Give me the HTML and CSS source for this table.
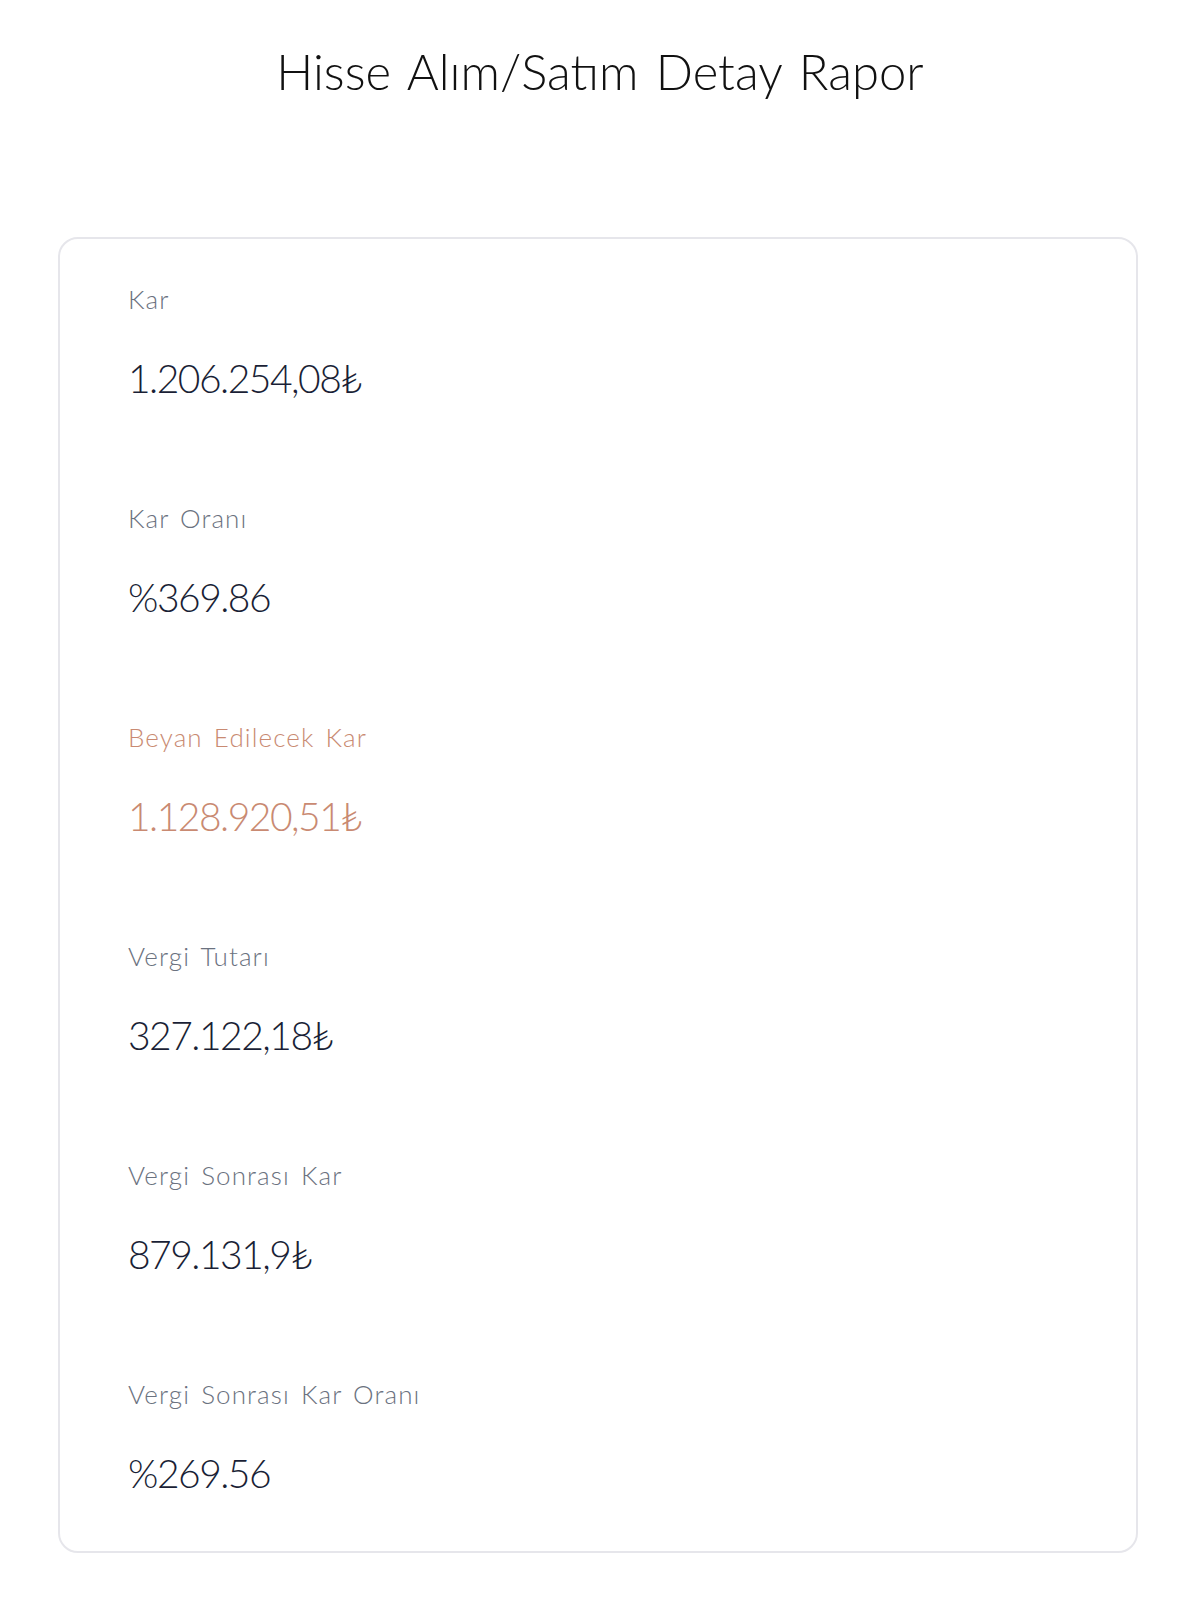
FILE: index.html
```html
<!DOCTYPE html>
<html lang="tr">
<head>
    <meta charset="UTF-8">
    <meta name="viewport" content="width=device-width, initial-scale=1.0">
    <title>Hisse Alım/Satım Detay Rapor</title>
    <link rel="stylesheet" href="styles.css">
</head>
<body>

    <h1 class="title">Hisse Alım/Satım Detay Rapor</h1>

    <div class="card">
        <div class="item">
            <div class="label">Kar</div>
            <div class="value">1.206.254,08₺</div>
        </div>
        <div class="item">
            <div class="label">Kar Oranı</div>
            <div class="value">%369.86</div>
        </div>
        <div class="item highlight">
            <div class="label">Beyan Edilecek Kar</div>
            <div class="value">1.128.920,51₺</div>
        </div>
        <div class="item">
            <div class="label">Vergi Tutarı</div>
            <div class="value">327.122,18₺</div>
        </div>
        <div class="item">
            <div class="label">Vergi Sonrası Kar</div>
            <div class="value">879.131,9₺</div>
        </div>
        <div class="item">
            <div class="label">Vergi Sonrası Kar Oranı</div>
            <div class="value">%269.56</div>
        </div>
    </div>

</body>
</html>
```

FILE: styles.css
```css
body {
    font-family: Lato, "Noto Sans", sans-serif;
    font-weight: 300;
    margin: 0;
    background: #fff;
    color: #1a1f36;
}
.title {
    margin: 0;
    padding-top: 45px;
    height: 237px;
    box-sizing: border-box;
    text-align: center;
    font-size: 49px;
    font-weight: 300;
    line-height: 52px;
    letter-spacing: 0;
    word-spacing: 4px;
    color: #111;
}
.card {
    width: 1080px;
    margin-left: 58px;
    box-sizing: border-box;
    padding: 45px 68px 55px;
    border: 2px solid #e6e6eb;
    border-radius: 20px;
    display: flex;
    flex-direction: column;
    gap: 102px;
}
.label {
    font-size: 26px;
    line-height: 30px;
    color: #6b7280;
    letter-spacing: 1.1px;
    word-spacing: 3px;
}
.value {
    margin-top: 41px;
    font-size: 39px;
    line-height: 46px;
    letter-spacing: -1.5px;
    color: #1a1f36;
}
.highlight .label,
.highlight .value {
    color: #c98a72;
}
```
